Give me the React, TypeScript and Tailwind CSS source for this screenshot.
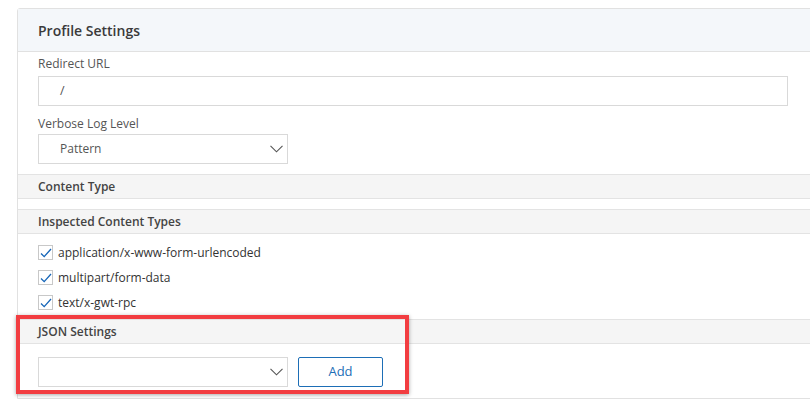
import * as React from 'react';

const font = { fontFamily: '"Open Sans", "Noto Sans", Arial, sans-serif' };

function Chevron() {
  return (
    <svg width="13" height="8" viewBox="0 0 13 8" fill="none" className="text-[#555]">
      <path d="M0.5 0.8 L6.5 6.8 L12.5 0.8" stroke="currentColor" strokeWidth="1.1" />
    </svg>
  );
}

function Check() {
  return (
    <span className="flex h-[15px] w-[15px] items-center justify-center border border-[#c8c8c8] bg-white">
      <svg width="12" height="10" viewBox="0 0 12 10" fill="none">
        <path d="M1 5.5 L4.2 8.6 L11 1" stroke="#1565b8" strokeWidth="1.3" />
      </svg>
    </span>
  );
}

function SectionHeader({ title }: { title: string }) {
  return (
    <div className="flex h-[25px] items-center border-y border-[#e3e3e3] bg-[#f5f5f5] pl-[20px] text-[12px] font-semibold text-[#444]">
      {title}
    </div>
  );
}

export default function App() {
  const types = ['application/x-www-form-urlencoded', 'multipart/form-data', 'text/x-gwt-rpc'];

  return (
    <div className="relative h-[399px] w-[810px] overflow-hidden bg-white" style={font}>
      <div className="ml-[17px] mt-[8px] w-[820px] rounded-tl-[3px] border border-[#e1e1e1]">
        <div className="flex h-[43px] items-center border-b border-[#e1e1e1] bg-[#f4f7fa] pl-[20px] text-[14px] font-semibold text-[#3a3a3a]">
          Profile Settings
        </div>

        <div className="px-[20px] pb-[10px] pt-[2px]">
          <div className="text-[12px] leading-[20px] text-[#555]">Redirect URL</div>
          <div className="mt-[2px] flex h-[30px] w-[750px] items-center border border-[#d9d9d9] pl-[21px] text-[12.5px] text-[#555]">
            /
          </div>
          <div className="mt-[8px] text-[12px] leading-[20px] text-[#555]">Verbose Log Level</div>
          <div className="flex h-[30px] w-[250px] items-center justify-between border border-[#d9d9d9] pl-[21px] pr-[4px] text-[12px] text-[#555]">
            <span>Pattern</span>
            <Chevron />
          </div>
        </div>

        <SectionHeader title="Content Type" />
        <div className="h-[10px]" />
        <SectionHeader title="Inspected Content Types" />

        <div className="flex flex-col gap-[10px] px-[20px] pb-[9px] pt-[11px]">
          {types.map((t) => (
            <div key={t} className="flex h-[15px] items-center gap-[5px] text-[12px] text-[#333]">
              <Check />
              <span>{t}</span>
            </div>
          ))}
        </div>

        <SectionHeader title="JSON Settings" />

        <div className="flex items-center gap-[10px] px-[20px] pb-[11px] pt-[13px]">
          <div className="flex h-[30px] w-[250px] items-center justify-end border border-[#d9d9d9] pr-[4px]">
            <Chevron />
          </div>
          <button className="flex h-[30px] w-[85px] items-center justify-center rounded-[2px] border border-[#1d6eb6] bg-white text-[13px] text-[#1d6eb6]">
            Add
          </button>
        </div>
      </div>

      <div className="pointer-events-none absolute left-[16px] top-[315px] h-[79px] w-[393px] border-[4px] border-[#f23d41] shadow-[0_1px_4px_rgba(0,0,0,0.35)]" />
    </div>
  );
}
